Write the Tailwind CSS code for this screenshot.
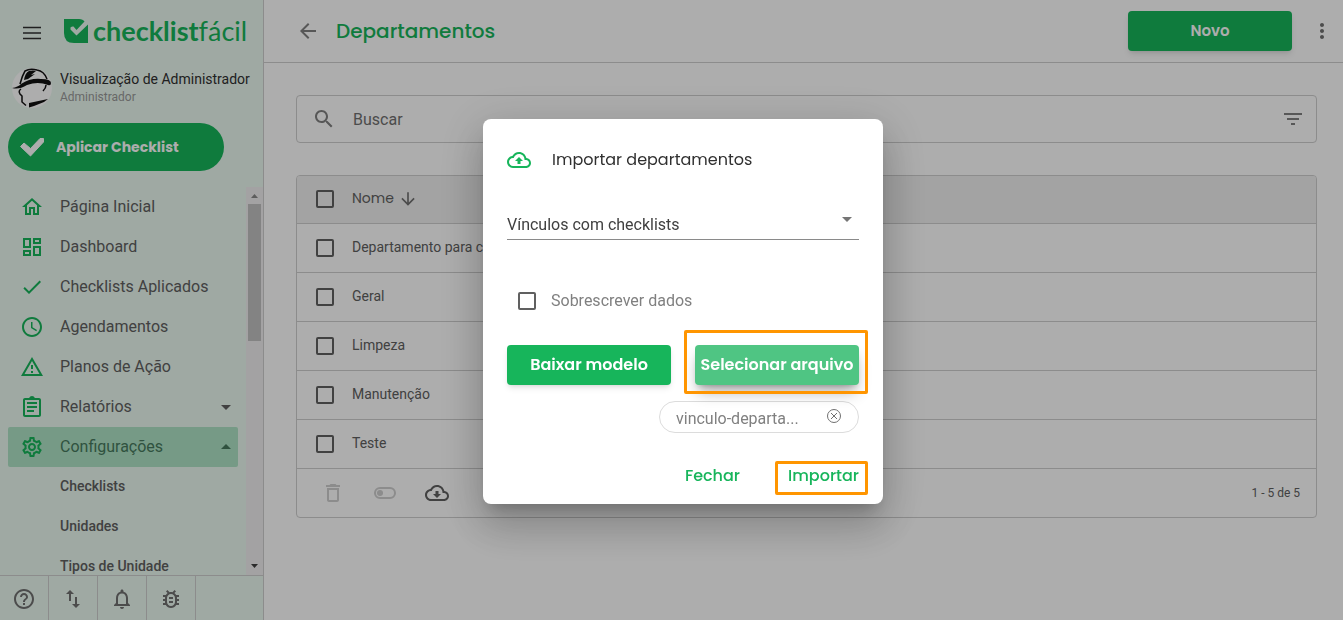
<!DOCTYPE html>
<html lang="pt-BR">
<head>
    <meta charset="UTF-8" />
    <meta name="viewport" content="width=device-width, initial-scale=1.0" />
    <title>Departamentos - Checklist Fácil</title>
    <script src="https://cdn.jsdelivr.net/npm/@tailwindcss/browser@4"></script>
</head>
<body class="h-screen overflow-hidden bg-white font-[Roboto,sans-serif] text-[#606060]">
    <div class="flex h-full">
        <!-- Menu lateral -->
        <aside class="flex w-[264px] shrink-0 flex-col border-r border-[#cecece] bg-[#ebf9f1]">
            <div class="flex h-[62px] items-center gap-[22px] pl-[22px]">
                <button type="button" aria-label="Menu" class="mt-1">
                    <svg class="h-5 w-5" viewBox="0 0 20 20" fill="none" stroke="#303030" stroke-width="1.500"><path d="M1 4.500h18M1 10h18M1 15.500h18" /></svg>
                </button>
                <a href="#" class="flex items-center gap-[5px] text-[#17b55b]">
                    <svg class="h-6 w-6" viewBox="0 0 24 24" fill="currentColor">
                        <path d="M0 0h15Q19 0 20.500 2.500L12.500 11 9.500 7.500Q8 7 6.500 8.500V10.500L12.500 16.500 24 5.500V24H10Q0 24 0 14Z" />
                    </svg>
                    <span class="font-[Lato,sans-serif] text-[27px] leading-8 font-bold">checklist<span class="font-normal">fácil</span></span>
                </a>
            </div>

            <div class="flex h-[50px] items-center gap-2 pt-[2px] pl-3">
                <svg class="h-10 w-10 shrink-0" viewBox="0 0 40 40">
                    <circle cx="20" cy="20" r="20" fill="#fff" />
                    <path d="M8 16Q10 8 13 3Q18 0 25 2Q32 3 35 11" fill="none" stroke="#111" stroke-width="1.500" />
                    <path d="M0 20Q6 19 9 16Q18 10 29 11Q39 11 39 15Q39 18 36 17Q26 13 15 17Q7 22 0 20Z" fill="#111" />
                    <path d="M12 12Q13 5 17 3Q21 2 24 3L19 7L23 6L16 11Z" fill="#111" />
                    <path d="M9 21Q6 23 8 26L10 28 10 34 14 37.500M34 17Q34 20 31 23" fill="none" stroke="#111" stroke-width="1.500" />
                    <path d="M17 35L36 31 32 34 22 38 17 39.500Z" fill="#111" />
                </svg>
                <div>
                    <p class="text-sm leading-[18px] text-[#303030]">Visualização de Administrador</p>
                    <p class="text-xs leading-[18px] text-[#999]">Administrador</p>
                </div>
            </div>

            <button type="button" class="mt-[11px] ml-2 flex h-12 w-[216px] shrink-0 items-center gap-3 rounded-full bg-[#17b55b] pl-3 font-[Poppins,sans-serif] text-sm font-bold text-white">
                <svg class="h-6 w-6" viewBox="0 0 24 24" fill="#fff" stroke="#fff" stroke-width="1" stroke-linejoin="round"><path d="M.5 11.500L4 8l6.500 5.500L20 3.500h3.500V7L10.500 21z" /></svg>
                Aplicar Checklist
            </button>

            <div class="mt-4 flex min-h-0 flex-1">
                <nav class="min-w-0 flex-1 overflow-hidden px-2">
                    <a href="#" class="flex h-10 items-center gap-4 pl-3">
                        <svg class="h-6 w-6" viewBox="0 0 24 24" fill="#17b55b"><path d="M12 5.690l5 4.500V18h-2v-6H9v6H7v-7.810l5-4.500M12 3L2 12h3v8h6v-6h2v6h6v-8h3L12 3z" /></svg>
                        Página Inicial
                    </a>
                    <a href="#" class="flex h-10 items-center gap-4 pl-3">
                        <svg class="h-6 w-6" viewBox="0 0 24 24" fill="#17b55b"><path d="M19 5v2h-4V5h4M9 5v6H5V5h4m10 8v6h-4v-6h4M9 17v2H5v-2h4M21 3h-8v6h8V3zM11 3H3v10h8V3zm10 8h-8v10h8V11zm-10 4H3v6h8v-6z" /></svg>
                        Dashboard
                    </a>
                    <a href="#" class="flex h-10 items-center gap-4 pl-3">
                        <svg class="h-6 w-6" viewBox="0 0 24 24" fill="#17b55b"><path d="M9 16.170L4.830 12l-1.420 1.410L9 19 21 7l-1.410-1.410z" /></svg>
                        Checklists Aplicados
                    </a>
                    <a href="#" class="flex h-10 items-center gap-4 pl-3">
                        <svg class="h-6 w-6" viewBox="0 0 24 24" fill="#17b55b"><path d="M11.990 2C6.470 2 2 6.480 2 12s4.470 10 9.990 10C17.520 22 22 17.520 22 12S17.520 2 11.990 2zM12 20c-4.420 0-8-3.580-8-8s3.580-8 8-8 8 3.580 8 8-3.580 8-8 8zm.5-13H11v6l5.250 3.150.75-1.230-4.500-2.670z" /></svg>
                        Agendamentos
                    </a>
                    <a href="#" class="flex h-10 items-center gap-4 pl-3">
                        <svg class="h-6 w-6" viewBox="0 0 24 24" fill="#17b55b"><path d="M12 5.990L19.530 19H4.470L12 5.990M12 2L1 21h22L12 2zm1 14h-2v2h2v-2zm0-6h-2v4h2v-4z" /></svg>
                        Planos de Ação
                    </a>
                    <a href="#" class="flex h-10 items-center gap-4 pl-3">
                        <svg class="h-6 w-6" viewBox="0 0 24 24" fill="#17b55b"><path d="M7 15h7v2H7zm0-4h10v2H7zm0-4h10v2H7zm12-4h-4.180C14.400 1.840 13.300 1 12 1s-2.400.84-2.820 2H5c-1.100 0-2 .9-2 2v15c0 1.100.9 2 2 2h14c1.100 0 2-.9 2-2V5c0-1.100-.9-2-2-2zm0 17H5V5h14v15z" /></svg>
                        <span class="flex-1">Relatórios</span>
                        <svg class="h-6 w-6" viewBox="0 0 24 24" fill="#606060"><path d="M7 10l5 5 5-5z" /></svg>
                    </a>
                    <a href="#" class="flex h-10 items-center gap-4 rounded-xs bg-[#aee4c6] pl-3 text-[#477a5e]">
                        <svg class="h-6 w-6" viewBox="0 0 24 24" fill="#17b55b"><path d="M19.430 12.980c.04-.32.07-.64.07-.98s-.03-.66-.07-.98l2.110-1.650c.19-.15.24-.42.12-.64l-2-3.460c-.12-.22-.39-.3-.61-.22l-2.490 1c-.52-.4-1.080-.73-1.690-.98l-.38-2.650C14.460 2.180 14.250 2 14 2h-4c-.25 0-.46.18-.49.42l-.38 2.650c-.61.25-1.170.59-1.690.98l-2.490-1c-.23-.09-.49 0-.61.22l-2 3.460c-.13.22-.07.49.12.64l2.110 1.650c-.04.32-.07.65-.07.98s.03.66.07.98l-2.110 1.650c-.19.15-.24.42-.12.64l2 3.460c.12.22.39.3.61.22l2.490-1c.52.4 1.080.73 1.690.98l.38 2.650c.03.24.24.42.49.42h4c.25 0 .46-.18.49-.42l.38-2.650c.61-.25 1.170-.59 1.690-.98l2.490 1c.23.09.49 0 .61-.22l2-3.460c.12-.22.07-.49-.12-.64l-2.110-1.650zm-1.980-1.710c.04.31.05.52.05.73s-.02.43-.05.73l-.14 1.130.89.7 1.080.84-.7 1.210-1.270-.51-1.040-.42-.9.68c-.43.32-.84.56-1.250.73l-1.060.43-.16 1.130-.2 1.350h-1.400l-.35-2.480-1.060-.43c-.43-.18-.83-.41-1.230-.71l-.91-.7-1.060.43-1.270.51-.7-1.210 1.080-.84.89-.7-.14-1.130c-.03-.31-.05-.54-.05-.74s.02-.43.05-.73l.14-1.130-.89-.7-1.080-.84.7-1.210 1.270.51 1.040.42.9-.68c.43-.32.84-.56 1.250-.73l1.060-.43.16-1.130.2-1.350h1.390l.35 2.480 1.060.43c.43.18.83.41 1.230.71l.91.7 1.060-.43 1.270-.51.7 1.210-1.070.85-.89.7.14 1.130zM12 8c-2.210 0-4 1.790-4 4s1.790 4 4 4 4-1.790 4-4-1.790-4-4-4zm0 6c-1.100 0-2-.9-2-2s.9-2 2-2 2 .9 2 2-.9 2-2 2z" /></svg>
                        <span class="flex-1">Configurações</span>
                        <svg class="h-6 w-6" viewBox="0 0 24 24" fill="#477a5e"><path d="M7 14l5-5 5 5z" /></svg>
                    </a>
                    <a href="#" class="flex h-10 items-center pb-[2px] pl-[52px] text-sm font-medium">Checklists</a>
                    <a href="#" class="flex h-10 items-center pb-[2px] pl-[52px] text-sm font-medium">Unidades</a>
                    <a href="#" class="flex h-10 items-center pb-[2px] pl-[52px] text-sm font-medium">Tipos de Unidade</a>
                </nav>
                <!-- Barra de rolagem -->
                <div class="flex w-[17px] shrink-0 flex-col items-center bg-[#f1eff0]">
                    <svg class="h-[17px] w-[17px]" viewBox="0 0 17 17" fill="#8a8a8a"><path d="M5 11l3.500-4 3.500 4z" /></svg>
                    <div class="h-[137px] w-[13px] bg-[#c1c1c1]"></div>
                    <div class="flex-1"></div>
                    <svg class="h-[17px] w-[17px]" viewBox="0 0 17 17" fill="#404040"><path d="M5 6l3.500 4 3.500-4z" /></svg>
                </div>
            </div>

            <div class="flex h-[45px] shrink-0 border-t border-[#cecece]">
                <button type="button" aria-label="Ajuda" class="flex w-[49px] items-center justify-center border-r border-[#cecece]">
                    <svg class="mt-[2px] h-6 w-6" viewBox="0 0 24 24" fill="#707070"><path d="M11 18h2v-2h-2v2zm1-16C6.480 2 2 6.480 2 12s4.480 10 10 10 10-4.480 10-10S17.520 2 12 2zm0 18c-4.410 0-8-3.590-8-8s3.590-8 8-8 8 3.590 8 8-3.590 8-8 8zm0-14c-2.210 0-4 1.790-4 4h2c0-1.100.9-2 2-2s2 .9 2 2c0 2-3 1.750-3 5h2c0-2.250 3-2.500 3-5 0-2.210-1.790-4-4-4z" /></svg>
                </button>
                <button type="button" aria-label="Sincronizar" class="flex w-[49px] items-center justify-center border-r border-[#cecece]">
                    <svg class="mt-[2px] h-6 w-6" viewBox="0 0 24 24" fill="#707070"><path d="M9 3L5 6.990h3V14h2V6.990h3L9 3zm7 14.010V10h-2v7.010h-3L15 21l4-3.990h-3z" /></svg>
                </button>
                <button type="button" aria-label="Notificações" class="flex w-[49px] items-center justify-center border-r border-[#cecece]">
                    <svg class="mt-[2px] h-6 w-6" viewBox="0 0 24 24" fill="#707070"><path d="M12 22c1.100 0 2-.9 2-2h-4c0 1.100.9 2 2 2zm6-6v-5c0-3.070-1.630-5.640-4.500-6.320V4c0-.83-.67-1.500-1.500-1.500s-1.500.67-1.500 1.500v.68C7.640 5.360 6 7.920 6 11v5l-2 2v1h16v-1l-2-2zm-2 1H8v-6c0-2.480 1.510-4.500 4-4.500s4 2.020 4 4.500v6z" /></svg>
                </button>
                <button type="button" aria-label="Reportar erro" class="flex w-[49px] items-center justify-center border-r border-[#cecece]">
                    <svg class="mt-[2px] h-6 w-6" viewBox="0 0 24 24" fill="#707070"><path d="M20 8h-2.810c-.45-.78-1.070-1.450-1.820-1.960L17 4.410 15.590 3l-2.170 2.170C12.960 5.060 12.490 5 12 5s-.96.06-1.410.17L8.410 3 7 4.410l1.620 1.630C7.880 6.550 7.260 7.220 6.810 8H4v2h2.090c-.05.33-.09.66-.09 1v1H4v2h2v1c0 .34.04.67.09 1H4v2h2.810c1.040 1.790 2.970 3 5.190 3s4.150-1.210 5.190-3H20v-2h-2.090c.05-.33.09-.66.09-1v-1h2v-2h-2v-1c0-.34-.04-.67-.09-1H20V8zm-4 7c0 2.210-1.790 4-4 4s-4-1.790-4-4v-4c0-2.210 1.790-4 4-4s4 1.790 4 4v4zm-6-1h4v2h-4zm0-4h4v2h-4z" /></svg>
                </button>
            </div>
        </aside>

        <!-- Conteúdo -->
        <main class="min-w-0 flex-1">
            <header class="flex h-[63px] items-center border-b border-[#cecece] pr-[9px] pl-8">
                <button type="button" aria-label="Voltar">
                    <svg class="h-6 w-6" viewBox="0 0 24 24" fill="#808080"><path d="M20 11H7.830l5.590-5.590L12 4l-8 8 8 8 1.410-1.410L7.830 13H20v-2z" /></svg>
                </button>
                <h1 class="flex-1 pl-4 font-[Poppins,sans-serif] text-xl leading-8 font-medium text-[#17b55b]">Departamentos</h1>
                <button type="button" class="h-10 w-[164px] rounded bg-[#17b55b] font-[Poppins,sans-serif] text-[15px] font-semibold text-white shadow-md">Novo</button>
                <button type="button" aria-label="Mais opções" class="ml-[18px]">
                    <svg class="h-6 w-6" viewBox="0 0 24 24" fill="#707070"><path d="M12 8c1.100 0 2-.9 2-2s-.9-2-2-2-2 .9-2 2 .9 2 2 2zm0 2c-1.100 0-2 .9-2 2s.9 2 2 2 2-.9 2-2-.9-2-2-2zm0 6c-1.100 0-2 .9-2 2s.9 2 2 2 2-.9 2-2-.9-2-2-2z" /></svg>
                </button>
            </header>

            <div class="pt-8 pr-[26px] pl-8">
                <div class="flex h-12 items-center rounded border border-[#cecece] pr-[11px] pl-[15px]">
                    <svg class="h-6 w-6 shrink-0" viewBox="0 0 24 24" fill="#808080"><path d="M15.500 14h-.79l-.28-.27C15.410 12.590 16 11.110 16 9.500 16 5.910 13.090 3 9.500 3S3 5.910 3 9.500 5.910 16 9.500 16c1.610 0 3.090-.59 4.230-1.570l.27.28v.79l5 4.990L20.490 19l-4.990-5zm-6 0C7.010 14 5 11.990 5 9.500S7.010 5 9.500 5 14 7.010 14 9.500 11.990 14 9.500 14z" /></svg>
                    <input type="text" aria-label="Buscar" placeholder="Buscar" class="min-w-0 flex-1 pt-[2px] pl-[17px] text-base outline-none placeholder:text-[#707070]" />
                    <button type="button" aria-label="Filtrar">
                        <svg class="h-6 w-6" viewBox="0 0 24 24" fill="#808080"><path d="M10 18h4v-2h-4v2zM3 6v2h18V6H3zm3 7h12v-2H6v2z" /></svg>
                    </button>
                </div>

                <div class="mt-8 overflow-hidden rounded border border-[#cecece]">
                    <table class="w-full border-separate border-spacing-0 text-left text-sm">
                        <thead>
                            <tr class="bg-[#f0f0f0]">
                                <th class="h-12 w-[55px] border-b border-[#cecece] pb-[2px] pl-[19px]"><input type="checkbox" aria-label="Selecionar todos" class="block h-[18px] w-[18px] appearance-none rounded-xs border-2 border-[#606060]" /></th>
                                <th class="border-b border-[#cecece] pb-[3px] font-[Poppins,sans-serif] font-normal">
                                    <button type="button" class="flex items-center gap-1">Nome
                                        <svg class="mt-[2px] h-5 w-5" viewBox="0 0 24 24" fill="#707070"><path d="M20 12l-1.410-1.410L13 16.170V4h-2v12.170l-5.580-5.590L4 12l8 8 8-8z" /></svg>
                                    </button>
                                </th>
                            </tr>
                        </thead>
                        <tbody>
                            <tr>
                                <td class="h-[49px] border-b border-[#cecece] pl-[19px]"><input type="checkbox" aria-label="Departamento para checklists" class="block h-[18px] w-[18px] appearance-none rounded-xs border-2 border-[#606060]" /></td>
                                <td class="border-b border-[#cecece] pb-[2px]">Departamento para checklists</td>
                            </tr>
                            <tr>
                                <td class="h-[49px] border-b border-[#cecece] pl-[19px]"><input type="checkbox" aria-label="Geral" class="block h-[18px] w-[18px] appearance-none rounded-xs border-2 border-[#606060]" /></td>
                                <td class="border-b border-[#cecece] pb-[2px]">Geral</td>
                            </tr>
                            <tr>
                                <td class="h-[49px] border-b border-[#cecece] pl-[19px]"><input type="checkbox" aria-label="Limpeza" class="block h-[18px] w-[18px] appearance-none rounded-xs border-2 border-[#606060]" /></td>
                                <td class="border-b border-[#cecece] pb-[2px]">Limpeza</td>
                            </tr>
                            <tr>
                                <td class="h-[49px] border-b border-[#cecece] pl-[19px]"><input type="checkbox" aria-label="Manutenção" class="block h-[18px] w-[18px] appearance-none rounded-xs border-2 border-[#606060]" /></td>
                                <td class="border-b border-[#cecece] pb-[2px]">Manutenção</td>
                            </tr>
                            <tr>
                                <td class="h-[49px] border-b border-[#cecece] pl-[19px]"><input type="checkbox" aria-label="Teste" class="block h-[18px] w-[18px] appearance-none rounded-xs border-2 border-[#606060]" /></td>
                                <td class="border-b border-[#cecece] pb-[2px]">Teste</td>
                            </tr>
                        </tbody>
                    </table>
                    <div class="flex h-12 items-center gap-7 pr-4 pl-6">
                        <button type="button" aria-label="Excluir" disabled>
                            <svg class="h-6 w-6" viewBox="0 0 24 24" fill="#cecece"><path d="M6 19c0 1.100.9 2 2 2h8c1.100 0 2-.9 2-2V7H6v12zM8 9h8v10H8V9zm7.500-5l-1-1h-5l-1 1H5v2h14V4z" /></svg>
                        </button>
                        <button type="button" aria-label="Ativar" disabled>
                            <svg class="h-6 w-6" viewBox="0 0 24 24"><rect x="2" y="7" width="20" height="10" rx="5" fill="none" stroke="#cecece" stroke-width="2" /><circle cx="7" cy="12" r="3" fill="#cecece" /></svg>
                        </button>
                        <button type="button" aria-label="Importar">
                            <svg class="h-6 w-6" viewBox="0 0 24 24" fill="#606060"><path d="M19.350 10.040C18.670 6.590 15.640 4 12 4 9.110 4 6.600 5.640 5.350 8.040 2.340 8.360 0 10.910 0 14c0 3.310 2.690 6 6 6h13c2.760 0 5-2.240 5-5 0-2.640-2.050-4.780-4.650-4.960zM19 18H6c-2.210 0-4-1.790-4-4s1.790-4 4-4h.71C7.370 7.690 9.480 6 12 6c3.040 0 5.500 2.460 5.500 5.500v.5H19c1.660 0 3 1.340 3 3s-1.340 3-3 3zm-5.500-8h-3v3H8l4 4 4-4h-2.500z" /></svg>
                        </button>
                        <p class="flex-1 text-right text-xs">1 - 5 de 5</p>
                    </div>
                </div>
            </div>
        </main>
    </div>

    <!-- Modal de importação -->
    <div class="fixed inset-0 flex items-center justify-center bg-black/32 pt-[3px] pl-[23px]">
        <div role="dialog" aria-labelledby="importTitle" class="w-[400px] rounded-lg bg-white px-6 pt-6 pb-[10px] shadow-[0_11px_15px_-7px_rgba(0,0,0,0.2),0_24px_38px_3px_rgba(0,0,0,0.14),0_9px_46px_8px_rgba(0,0,0,0.12)]">
            <div class="flex h-8 items-center gap-[21px] pt-[2px]">
                <svg class="h-6 w-6" viewBox="0 0 24 24" fill="#17b55b"><path d="M19.350 10.040C18.670 6.590 15.640 4 12 4 9.110 4 6.600 5.640 5.350 8.040 2.340 8.360 0 10.910 0 14c0 3.310 2.690 6 6 6h13c2.760 0 5-2.240 5-5 0-2.640-2.050-4.780-4.650-4.960zM19 18H6c-2.210 0-4-1.790-4-4s1.790-4 4-4h.71C7.370 7.690 9.480 6 12 6c3.040 0 5.500 2.460 5.500 5.500v.5H19c1.660 0 3 1.340 3 3s-1.340 3-3 3zM8 13h2.500v3h3v-3H16l-4-4z" /></svg>
                <h2 id="importTitle" class="font-[Poppins,sans-serif] text-base text-[#303030]">Importar departamentos</h2>
            </div>

            <div class="relative mt-8">
                <select aria-label="Tipo de importação" class="block h-[33px] w-full appearance-none border-b border-[#8a8a8a] bg-transparent pt-1 text-base text-[#404040] outline-none">
                    <option>Vínculos com checklists</option>
                </select>
                <svg class="pointer-events-none absolute top-0 right-0 h-6 w-6" viewBox="0 0 24 24" fill="#757575"><path d="M7 10l5 5 5-5z" /></svg>
            </div>

            <label class="mt-[41px] flex h-10 items-center gap-[15px] pl-[11px] text-[#808080]">
                <input type="checkbox" class="h-[18px] w-[18px] appearance-none rounded-xs border-2 border-[#606060]" />
                Sobrescrever dados
            </label>

            <div class="mt-6 flex justify-between font-[Poppins,sans-serif] text-base font-semibold text-white">
                <button type="button" class="h-10 w-[164px] rounded bg-[#17b55b] shadow-md">Baixar modelo</button>
                <div class="relative">
                    <button type="button" class="h-10 w-[164px] rounded bg-[#4fc583] whitespace-nowrap shadow-lg shadow-black/30">Selecionar arquivo</button>
                    <span class="pointer-events-none absolute -top-[15px] -right-[9px] -bottom-[9px] -left-[11px] rounded-xs border-3 border-[#ff9500]"></span>
                </div>
            </div>

            <div class="mt-4 ml-auto flex h-8 w-[200px] items-center justify-between rounded-full border border-[#dcdcdc] px-4 text-[#808080]">
                <span class="pt-1">vinculo-departa...</span>
                <button type="button" aria-label="Remover arquivo" class="pb-[2px]">
                    <svg class="h-4 w-4" viewBox="0 0 16 16" fill="none" stroke="#707070"><circle cx="8" cy="8" r="6.500" /><path d="M5 5l6 6M11 5l-6 6" /></svg>
                </button>
            </div>

            <div class="mt-[25px] flex h-9 items-center justify-end gap-12 font-[Poppins,sans-serif] text-base font-medium text-[#17b55b]">
                <button type="button">Fechar</button>
                <div class="relative">
                    <button type="button">Importar</button>
                    <span class="pointer-events-none absolute -top-[3px] -right-[9px] -bottom-[7px] -left-[13px] rounded-xs border-3 border-[#ff9500]"></span>
                </div>
            </div>
        </div>
    </div>
</body>
</html>
